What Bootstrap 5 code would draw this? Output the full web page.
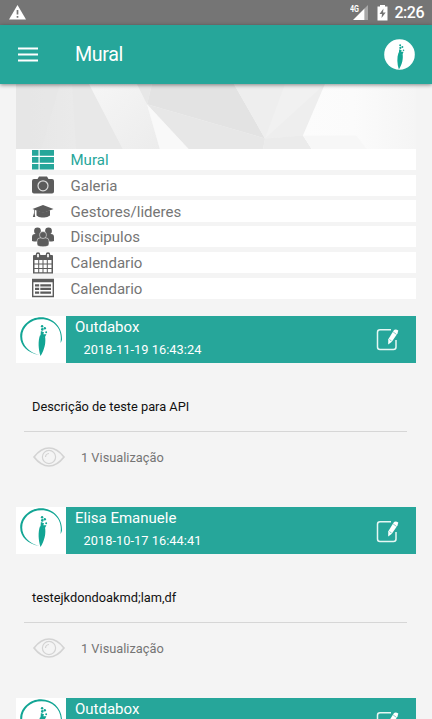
<!DOCTYPE html>
<html lang="pt-BR">
<head>
<meta charset="utf-8">
<meta name="viewport" content="width=device-width, initial-scale=1">
<title>Mural</title>
<link href="https://cdn.jsdelivr.net/npm/bootstrap@5.3.0/dist/css/bootstrap.min.css" rel="stylesheet">
<style>
html,body{height:719px;overflow:hidden}
body{background:#f4f4f4;font-family:Roboto,"Liberation Sans",sans-serif;color:#757575;line-height:1}
svg{display:block;flex:none}
.status{height:25px;background:#757575;padding:0 8px 0 9px}
.clock{font-size:16px;font-weight:500;margin-left:7px;letter-spacing:-.5px}
.appbar{height:58.5px;background:#26a69a;padding:0 17px 0 18px;box-shadow:0 1px 4px rgba(0,0,0,.45);z-index:2}
.screen-title{font-size:19.7px;margin-left:37px;padding-top:2px;letter-spacing:-.4px}
.page{height:635.5px;overflow:hidden;padding:0 16.5px 0 15.5px}
.banner{height:65.5px}
.menu-item{height:21.2px;margin-bottom:4.55px;background:#fff;padding-left:16.5px;font-size:15px;line-height:19px}
.menu-item span{padding-top:2px;letter-spacing:.02px}
.menu-item svg{margin-right:16.5px}
.menu-item.active{color:#26a69a}
.ico{color:#5c5c5c}
.active .ico{color:#26a69a}
.posts{padding-top:12.3px}
.post{height:191.3px}
.post-head{height:47.3px}
.post-logo{width:50.5px;background:#fff}
.post-bar{background:#26a69a;padding:0 15.5px 0 9px;color:#fff}
.author{font-size:15px;padding-top:4px}
.date{font-size:12.8px;padding:9px 0 0 8.5px;letter-spacing:.04px}
.post-text{height:69px;margin:0 8.5px;padding:37.5px 8px 0;border-bottom:1.4px solid #d6d6d6;font-size:12.8px;color:#111}
.views{padding:15px 0 0 17px;font-size:12.8px}
.views span{margin-left:16.5px;padding-top:3px}
</style>
<script src="https://cdn.jsdelivr.net/npm/bootstrap@5.3.0/dist/js/bootstrap.bundle.min.js"></script>
</head>
<body>
<svg class="d-none">
  <symbol id="feather" viewBox="0 0 10 32">
    <path d="M2.600 11C.4 17 .8 25 3 32C7 26 8.800 18 7.400 12L5.500 13.600Z"/>
    <path d="M3 11.500L3.400 7L6.500 8.200L5.800 10.200L8.900 10.300L7.500 13L4 14.500Z"/>
    <circle cx="4.600" cy="2.200" r="1.200"/><circle cx="7.300" cy="4.200" r="1.200"/><circle cx="4.800" cy="5.400" r="1.300"/><circle cx="8.700" cy="8.300" r="1"/>
  </symbol>
  <symbol id="logo" viewBox="0 0 50 47">
    <path d="M23 39C12 37 4.200 30 4.200 20.500C4.200 10 14 1.300 25 1.300C37 1.300 46.500 11 46 23.500C45.700 25 45 26 44.500 27C47 13 38 3.200 25.500 3.200C14.500 3.200 6.200 11 6.200 20.500C6.200 29 13 36.500 23 39Z" fill="#12a594"/>
    <g fill="#12a594"><use href="#feather" x="21.500" y="8" width="10" height="32"/></g>
  </symbol>
  <symbol id="edit" viewBox="0 0 24 24">
    <path d="M15 2.800H4Q1.500 2.800 1.500 5.300V20Q1.500 22.500 4 22.500H17.500Q20 22.500 20 20V13" fill="none" stroke="#e6f7f4" stroke-width="1.500"/>
    <path d="M17.500 3.800Q19.300 1.300 22.300 3.600L21.500 6.500L15.800 14.800L12.200 17.500L12.300 12.200Z" fill="#fff"/>
    <path d="M13.400 12.600L15.600 14M17.200 5L20.500 7.400" stroke="#26a69a" stroke-width=".6"/>
  </symbol>
  <symbol id="eye" viewBox="0 0 32 20">
    <g fill="none" stroke="#d3d3d3"><path d="M1 10Q8 1 16 1T31 10Q24 19 16 19T1 10Z" stroke-width="1.700"/><circle cx="16" cy="10" r="6.600" stroke-width="1.200"/><path d="M12.500 10Q12.700 6.800 16 6.500" stroke-width="1.200"/></g>
  </symbol>
</svg>

<header class="status d-flex align-items-center text-white">
  <svg width="17" height="15" viewBox="0 0 17 15"><path d="M8.500 0L17 14.500H0Z" fill="#fff"/><path d="M8.500 5V9.500M8.500 11V12.700" stroke="#757575" stroke-width="1.700"/></svg>
  <svg class="ms-auto" width="19" height="17" viewBox="0 0 19 17">
    <path d="M18 1V16H14.500V4.500Z" fill="#a8a8a8"/><path d="M14.500 4.500V16H3Z" fill="#fff"/>
    <text x="0" y="8" font-size="8.300" font-weight="700" fill="#fff" textLength="9" lengthAdjust="spacingAndGlyphs">4G</text>
  </svg>
  <svg class="ms-2" width="11" height="16" viewBox="0 0 11 16"><path d="M3 0H8V1.500H10.500V15.500H.5V1.500H3Z" fill="#fff"/><path d="M6.500 3.500L2.500 9H5L4.500 13L8.700 7.500H6Z" fill="#757575"/></svg>
  <span class="clock">2:26</span>
</header>

<nav class="appbar d-flex align-items-center text-white position-relative">
  <svg width="20" height="15" viewBox="0 0 20 15"><path d="M0 1.500H20M0 7.500H20M0 13.500H20" stroke="#fff" stroke-width="2"/></svg>
  <span class="screen-title">Mural</span>
  <svg class="ms-auto" width="31" height="31" viewBox="0 0 31 31"><circle cx="15.500" cy="15.500" r="15.300" fill="#fff"/><g fill="#12a594"><use href="#feather" x="11.500" y="4.500" width="10" height="26"/></g></svg>
</nav>

<main class="page">
  <svg class="banner w-100" viewBox="0 0 400 65" preserveAspectRatio="none">
    <defs>
      <linearGradient id="g1"><stop stop-color="#e6e6e6"/><stop offset="1" stop-color="#efefef"/></linearGradient>
      <linearGradient id="g2" x1="0" y1="0" x2="1" y2="1"><stop stop-color="#f6f6f6"/><stop offset="1" stop-color="#ececec"/></linearGradient>
      <linearGradient id="g3"><stop stop-color="#fcfcfc"/><stop offset=".45" stop-color="#fbfbfb"/><stop offset="1" stop-color="#f5f5f5"/></linearGradient>
    </defs>
    <path d="M0 0H130V65H0Z" fill="url(#g1)"/>
    <path d="M44 0L25 65H0V0Z" fill="#e6e6e6" opacity=".6"/>
    <path d="M56 0H73L107 65H60Z" fill="#e8e8e8"/>
    <path d="M73 0H121L131 20L144 65H107Z" fill="url(#g2)"/>
    <path d="M121 0H136L131 20Z" fill="#e7e7e7"/>
    <path d="M136 0H218L249 54L131 20Z" fill="#e3e3e3"/>
    <path d="M131 20L249 54L247 65H173Z" fill="#e7e7e7"/>
    <path d="M131 20L173 65H144Z" fill="#f9f9f9"/>
    <path d="M218 0H309L287 51L249 54Z" fill="#f1f1f1"/>
    <path d="M218 0H269L249 54Z" fill="#eee"/>
    <path d="M309 0L287 51L249 54Z" fill="#ececec" opacity=".7"/>
    <path d="M249 54L287 51L296 65H247Z" fill="#ebebeb"/>
    <path d="M309 0H400V65H296L287 51Z" fill="url(#g3)"/>
    <path d="M287 51H340L351 65H296Z" fill="#f7f7f7"/>
  </svg>

  <div>
    <div class="menu-item active d-flex align-items-center"><svg class="ico" width="22" height="20" viewBox="0 0 22 20" fill="currentColor"><path d="M0 0H6.500V5.700H0ZM7.700 0H22V5.700H7.700ZM0 7H6.500V12.700H0ZM7.700 7H22V12.700H7.700ZM0 14H6.500V19.500H0ZM7.700 14H22V19.500H7.700Z"/></svg><span>Mural</span></div>
    <div class="menu-item d-flex align-items-center"><svg class="ico" width="22" height="20" viewBox="0 0 22 20"><path d="M2 4H5.500L7 1.500H15L16.500 4H20Q22 4 22 6V16.500Q22 18.500 20 18.500H2Q0 18.500 0 16.500V6Q0 4 2 4Z" fill="currentColor"/><circle cx="11" cy="10.800" r="5" fill="none" stroke="#ddd" stroke-width="1.200"/></svg><span>Galeria</span></div>
    <div class="menu-item d-flex align-items-center"><svg class="ico" width="22" height="20" viewBox="0 0 22 20" fill="currentColor"><path d="M11 4L21.500 8L11 12L.5 8Z"/><path d="M4.500 9.300L11 11.500L18 9.300V14.500Q15 17 11 16.500Q7 17 4.500 14.500Z"/><path d="M2 8.300V12L.8 16H3.200L2.700 12V8.500Z"/></svg><span>Gestores/lideres</span></div>
    <div class="menu-item d-flex align-items-center"><svg class="ico" width="22" height="20" viewBox="0 0 22 20" fill="currentColor"><circle cx="5.500" cy="4" r="3.400"/><circle cx="16.500" cy="4" r="3.400"/><path d="M0 14V10Q0 7 3 7H8V14.500H2ZM22 14V10Q22 7 19 7H14V14.500H20Z"/><g stroke="#fff" stroke-width=".5"><path d="M5 17V14Q5 10.800 8.500 10.800H13.500Q17 10.800 17 14V17Q17 19.800 11 19.800T5 17Z"/><circle cx="11" cy="8" r="3.500"/></g></svg><span>Discipulos</span></div>
    <div class="menu-item d-flex align-items-center"><svg class="ico" width="22" height="22" viewBox="0 0 22 22"><path d="M1 4Q1 3 2 3H20Q21 3 21 4V21.500H1Z" fill="currentColor"/><path d="M2.500 8H6.200V11.500H2.500ZM7.200 8H10.500V11.500H7.200ZM11.500 8H14.800V11.500H11.500ZM15.800 8H19.500V11.500H15.800ZM2.500 12.500H6.200V16H2.500ZM7.200 12.500H10.500V16H7.200ZM11.500 12.500H14.800V16H11.500ZM15.800 12.500H19.500V16H15.800ZM2.500 17H6.200V20.300H2.500ZM7.200 17H10.500V20.300H7.200ZM11.500 17H14.800V20.300H11.500ZM15.800 17H19.500V20.300H15.800Z" fill="#fff"/><path d="M6 2.500V5M16 2.500V5" stroke="#5c5c5c" stroke-width="4.500" stroke-linecap="round"/><path d="M6 2V5.300M16 2V5.300" stroke="#fff" stroke-width="1.700"/></svg><span>Calendario</span></div>
    <div class="menu-item d-flex align-items-center"><svg class="ico" width="22" height="20" viewBox="0 0 22 20"><path d="M.7 1.500H21.300V18.500H.7Z" fill="#fff" stroke="currentColor" stroke-width="1.400"/><path d="M0 1H22V4.300H0ZM3 6.200H7.200V8.500H3ZM8.300 6.200H19V8.500H8.300ZM3 9.800H7.200V12.100H3ZM8.300 9.800H19V12.100H8.300ZM3 13.400H7.200V15.700H3ZM8.300 13.400H19V15.700H8.300Z" fill="currentColor"/></svg><span>Calendario</span></div>
  </div>

  <div class="posts">
    <article class="post">
      <div class="post-head d-flex">
        <div class="post-logo"><svg width="50" height="47"><use href="#logo"/></svg></div>
        <div class="post-bar d-flex flex-fill align-items-center"><div class="align-self-start"><div class="author">Outdabox</div><div class="date">2018-11-19 16:43:24</div></div><svg class="ms-auto" width="24" height="24"><use href="#edit"/></svg></div>
      </div>
      <div class="post-text">Descrição de teste para API</div>
      <div class="views d-flex align-items-center"><svg width="32" height="20"><use href="#eye"/></svg><span>1 Visualização</span></div>
    </article>
    <article class="post">
      <div class="post-head d-flex">
        <div class="post-logo"><svg width="50" height="47"><use href="#logo"/></svg></div>
        <div class="post-bar d-flex flex-fill align-items-center"><div class="align-self-start"><div class="author">Elisa Emanuele</div><div class="date">2018-10-17 16:44:41</div></div><svg class="ms-auto" width="24" height="24"><use href="#edit"/></svg></div>
      </div>
      <div class="post-text">testejkdondoakmd;lam,df</div>
      <div class="views d-flex align-items-center"><svg width="32" height="20"><use href="#eye"/></svg><span>1 Visualização</span></div>
    </article>
    <article class="post">
      <div class="post-head d-flex">
        <div class="post-logo"><svg width="50" height="47"><use href="#logo"/></svg></div>
        <div class="post-bar d-flex flex-fill align-items-center"><div class="align-self-start"><div class="author">Outdabox</div></div><svg class="ms-auto" width="24" height="24"><use href="#edit"/></svg></div>
      </div>
    </article>
  </div>
</main>
</body>
</html>
